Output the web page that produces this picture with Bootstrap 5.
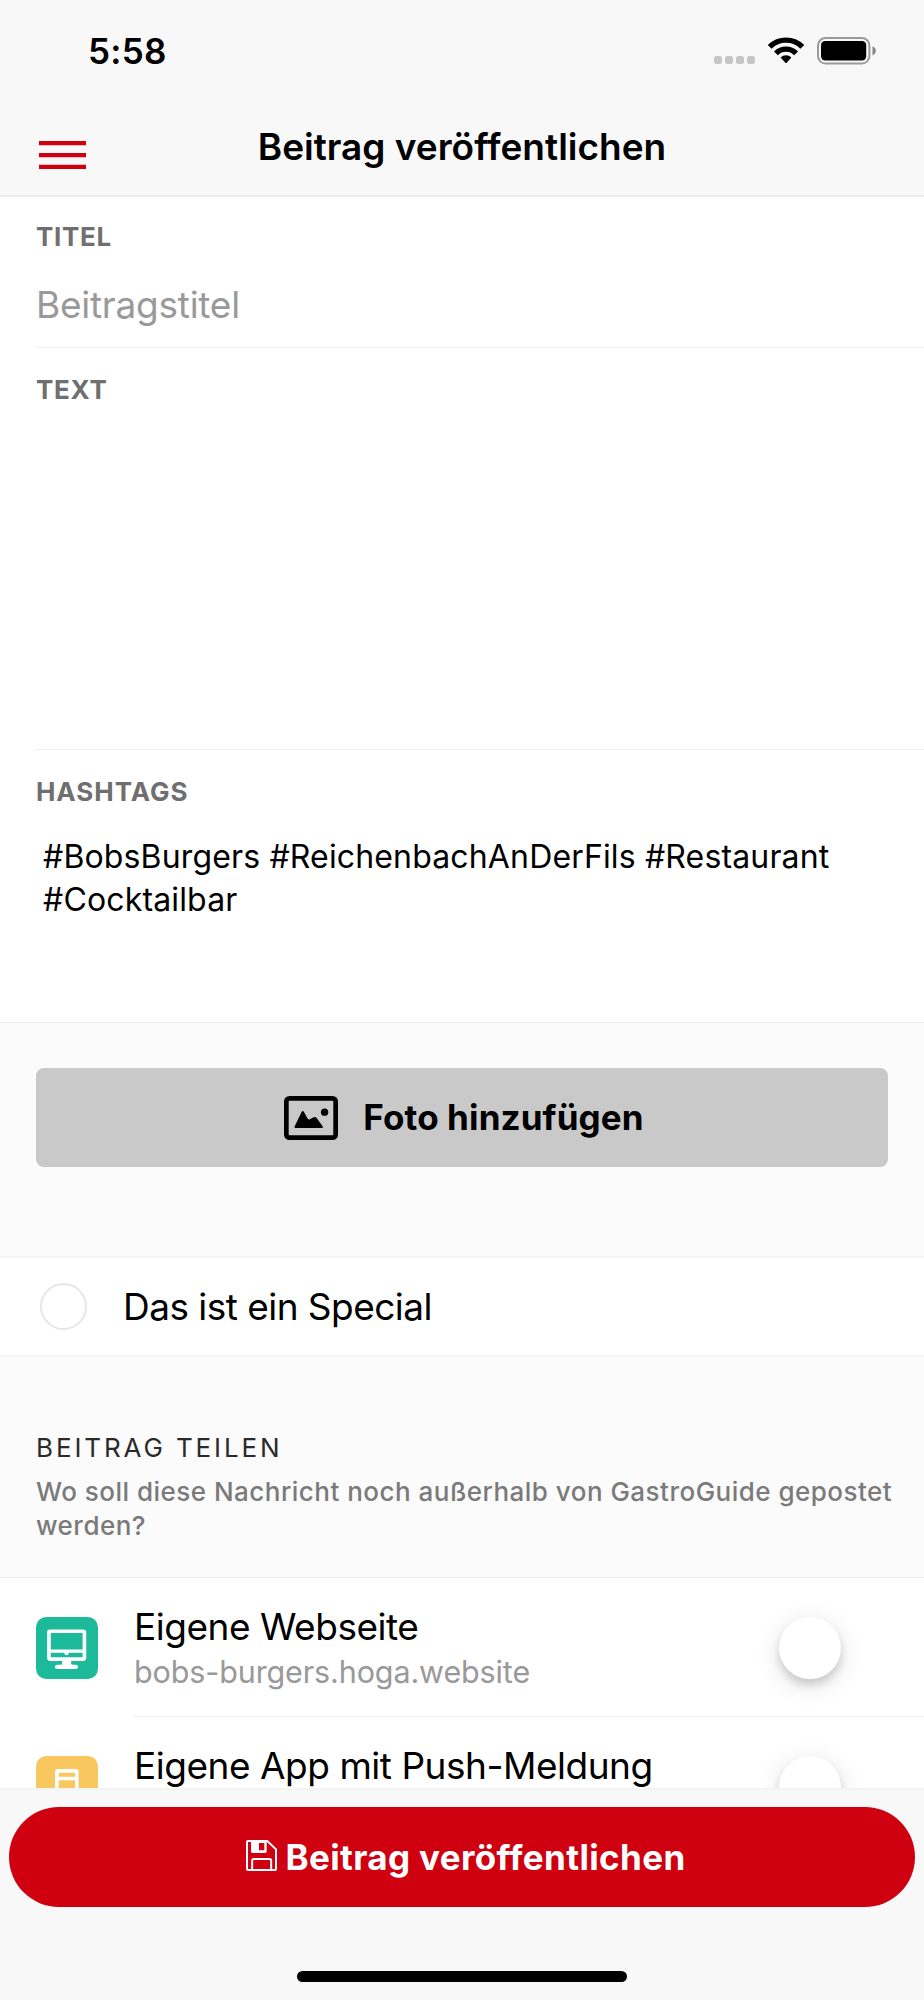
<!DOCTYPE html>
<html lang="de">
<head>
<meta charset="utf-8">
<meta name="viewport" content="width=device-width, initial-scale=1">
<title>Beitrag veröffentlichen</title>
<link href="https://cdn.jsdelivr.net/npm/bootstrap@5.3.0/dist/css/bootstrap.min.css" rel="stylesheet">
<style>
body{font-family:Inter,"Liberation Sans",sans-serif;color:#000;font-size:37px;line-height:48px;background:#fbfbfb}
svg{display:block;flex:none}
.screen{height:2000px}
/* header */
.bar-bg{background:#f8f8f8}
.statusbar{height:101px;padding:0 48px 0 88px}
.clock{font-size:35px;font-weight:600;letter-spacing:.3px}
.signal{gap:3px;margin:18px 13px 0 0}
.signal i{width:8px;height:8px;border-radius:2.5px;background:#c6c6c6}
.titlebar{display:grid;grid-template-columns:1fr auto 1fr;height:96px;border-bottom:2px solid #ececec;padding-bottom:2px}
.titlebar h1{font-size:37px;font-weight:600;line-height:48px}
.burger{margin:15px 0 0 39px}
/* form fields */
.field{background:#fff;padding:24px 0 0 36px}
.field-title{height:151px}
.field-text{height:402px;padding-top:26px}
.field-tags{height:273px;padding-top:26px;border-bottom:1px solid #ededed}
.field .rule{height:1px;background:#efefef}
.caption-sm{font-size:26px;line-height:32px;font-weight:700;color:#6f6f6f;letter-spacing:.7px}
.caption-sm.wide{letter-spacing:.95px}
.hint{color:#999;margin-top:28px;letter-spacing:-.25px}
.tags{font-size:32px;line-height:43px;margin-top:27px;padding-left:7px;letter-spacing:.15px}
/* photo button */
.photo{padding:45px 36px 89px}
.btn-photo{height:99px;border:0;border-radius:8px;background:#c9c9c9;font-size:35px;font-weight:700;letter-spacing:.12px;color:#000;gap:25px}
/* special */
.special{height:101px;background:#fff;border:solid #f4f4f4;border-width:2px 0;padding-left:40px;letter-spacing:-.53px}
.ring{width:47px;height:47px;border:2px solid #e6e6e6;border-radius:50%;margin-right:36px}
/* share */
.share-head{height:220px;padding:75px 20px 0 36px;font-size:26px;line-height:34px;color:#7a7a7a;font-weight:500;letter-spacing:.48px}
.share-head h2{font-size:26px;line-height:32px;font-weight:400;color:#2a2a2a;letter-spacing:2.88px;margin:0 0 11px}
.share-list{background:#fff;border-top:1px solid #ececec;height:211px}
.share-row{height:139px;padding-left:36px}
.share-row>svg{margin-top:39px}
.share-body{margin-left:36px;border-bottom:1px solid #ededed;padding:25px 83px 0 0;letter-spacing:-.47px}
.share-body.last{border:0}
.share-body small{display:block;font-size:30.5px;line-height:42px;color:#999;letter-spacing:-.12px}
.knob{width:62px;height:62px;margin-top:14px;border-radius:50%;background:#fff;box-shadow:0 6px 26px rgba(0,0,0,.12),0 6px 9px rgba(0,0,0,.14)}
/* footer */
.footer-bar{height:212px;border-top:2px solid #f3f3f3;padding:17px 9px 0}
.btn-publish{height:100px;border:0;border-radius:50px;background:#cf000f;color:#fff;font-size:35px;font-weight:700;letter-spacing:.35px;gap:8px}
.home{width:330px;height:11px;border-radius:6px;background:#000;margin:64px auto 0}
.disk{margin-top:-3px}
</style>
</head>
<body>
<div class="screen d-flex flex-column overflow-hidden">
  <header class="bar-bg">
    <div class="statusbar d-flex align-items-center justify-content-between">
      <span class="clock">5:58</span>
      <div class="d-flex align-items-center">
        <div class="signal d-flex"><i></i><i></i><i></i><i></i></div>
        <svg width="36" height="27" viewBox="0 0 36 27" fill="none" stroke="#000" stroke-width="5.4"><path d="M1.7 9.9A23 23 0 0 1 34.3 9.9M7.9 16.3A14.3 14.3 0 0 1 28.1 16.3"/><path d="M12.6 20.4A7.9 7.9 0 0 1 23.4 20.4L18.7 25.7Q18 26.3 17.3 25.7Z" fill="#000" stroke="none"/></svg>
        <svg class="ms-2" width="64" height="28" viewBox="-5 0 64 28"><rect x="1" y="1" width="51.4" height="25.6" rx="7.5" fill="none" stroke="#9a9a9a" stroke-width="2"/><rect x="4" y="4" width="45.2" height="19.5" rx="4.2"/><path d="M55.5 9.2Q58.8 10.5 58.8 13.8T55.5 18.4Z" fill="#888"/></svg>
      </div>
    </div>
    <nav class="titlebar align-items-center">
      <svg class="burger" width="47" height="28" viewBox="0 0 47 28" fill="#cf000f"><path d="M0 0h47v4.2H0zM0 12h47v4.2H0zM0 23.8h47V28H0z"/></svg>
      <h1 class="m-0">Beitrag veröffentlichen</h1>
    </nav>
  </header>

  <section class="field field-title d-flex flex-column">
    <div class="caption-sm">TITEL</div>
    <div class="hint">Beitragstitel</div>
    <div class="rule mt-auto"></div>
  </section>
  <section class="field field-text d-flex flex-column">
    <div class="caption-sm">TEXT</div>
    <div class="rule mt-auto"></div>
  </section>
  <section class="field field-tags">
    <div class="caption-sm wide">HASHTAGS</div>
    <div class="tags">#BobsBurgers #ReichenbachAnDerFils #Restaurant<br>#Cocktailbar</div>
  </section>

  <div class="photo">
    <button class="btn btn-photo w-100 d-flex align-items-center justify-content-center p-0 ps-1">
      <svg width="54" height="44" viewBox="0 0 161 131"><rect x="7" y="7" width="147" height="117" rx="9" fill="none" stroke="#000" stroke-width="14"/><path d="M33 95Q30 95 32 90L52 48Q56 41 60 48L70 66Q74 72 80 68L87 64Q93 61 98 66L115 90Q118 95 114 95Z"/><circle cx="121" cy="48" r="11"/></svg>
      Foto hinzufügen
    </button>
  </div>

  <div class="special d-flex align-items-center"><span class="ring"></span>Das ist ein Special</div>

  <div class="share-head">
    <h2>BEITRAG TEILEN</h2>
    Wo soll diese Nachricht noch außerhalb von GastroGuide gepostet werden?
  </div>

  <div class="share-list overflow-hidden">
    <div class="share-row d-flex">
      <svg width="62" height="62" viewBox="0 0 187 187"><rect width="187" height="187" rx="31" fill="#1cba9b"/><rect x="39" y="43" width="107" height="84" rx="3" fill="none" stroke="#fff" stroke-width="11"/><path d="M39 98h107v10H99a7 7 0 0 1-14 0H39zM79 130h27v11q0 4 6 4H73q6 0 6-4z" fill="#fff"/><rect x="57" y="144" width="70" height="13" rx="6.5" fill="#fff"/></svg>
      <div class="share-body flex-grow-1 d-flex justify-content-between">
        <div>Eigene Webseite<small>bobs-burgers.hoga.website</small></div>
        <span class="knob"></span>
      </div>
    </div>
    <div class="share-row d-flex">
      <svg width="62" height="62" viewBox="0 0 187 187"><rect width="187" height="187" rx="31" fill="#f8c75d"/><path d="M63 140V47Q63 45 65 45H121Q123 45 123 47V140ZM63 68H123" fill="none" stroke="#fff" stroke-width="11"/></svg>
      <div class="share-body last flex-grow-1 d-flex justify-content-between">
        <div>Eigene App mit Push-Meldung</div>
        <span class="knob"></span>
      </div>
    </div>
  </div>

  <footer class="footer-bar bar-bg">
    <button class="btn btn-publish w-100 d-flex align-items-center justify-content-center p-0 ps-2">
      <svg class="disk" width="31" height="31" viewBox="0 0 93 93" fill="none" stroke="#fff" stroke-width="6"><path d="M6 3H64L90 28V87Q90 90 87 90H6Q3 90 3 87V6Q3 3 6 3Z"/><path d="M18.500 90V62Q18.500 57 23 57H71Q75.500 57 75.500 62V90"/><path d="M15 3H62V34Q62 39 57 39H20Q15 39 15 34ZM39 9V31H55V9Z" fill="#fff" fill-rule="evenodd" stroke="none"/></svg>
      Beitrag veröffentlichen
    </button>
    <div class="home"></div>
  </footer>
</div>
<script src="https://cdn.jsdelivr.net/npm/bootstrap@5.3.0/dist/js/bootstrap.bundle.min.js"></script>
</body>
</html>
